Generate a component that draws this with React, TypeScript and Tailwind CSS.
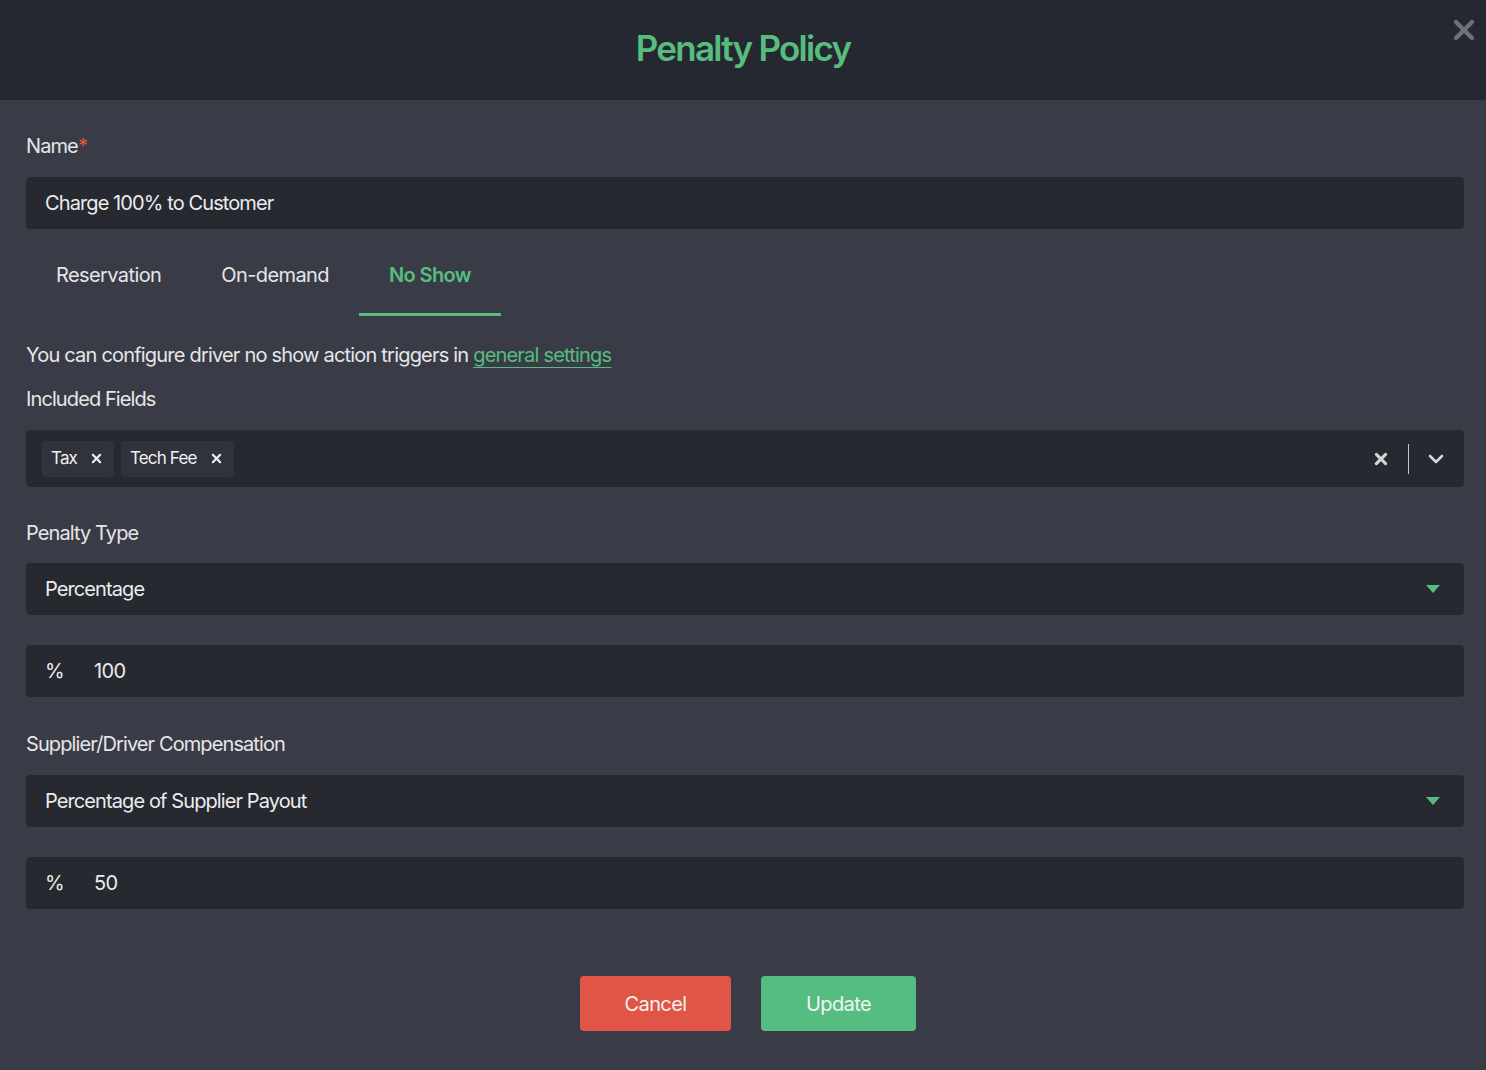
import React, { useState } from 'react';

const tabs = ['Reservation', 'On-demand', 'No Show'];

const CaretDown = () => (
  <svg width="16" height="10" viewBox="0 0 16 10"><path d="M1 1h14L8 9z" fill="#56bd7e" /></svg>
);

const XSmall = ({ size = 12, stroke = 2.4 }: { size?: number; stroke?: number }) => (
  <svg width={size} height={size} viewBox="0 0 12 12">
    <path d="M2 2l8 8M10 2l-8 8" stroke="currentColor" strokeWidth={stroke} strokeLinecap="round" />
  </svg>
);

const Label = ({ children }: { children: React.ReactNode }) => (
  <div className="text-[20px] leading-6 text-[#e6e6e8] tracking-[-0.045em]">{children}</div>
);

const SelectBox = ({ value }: { value: string }) => (
  <div className="h-[52px] rounded bg-[#262930] flex items-center justify-between pl-[19px] pr-[23px]">
    <span className="text-[20px] text-[#ececee] tracking-[-0.045em]">{value}</span>
    <CaretDown />
  </div>
);

const PercentInput = ({ value }: { value: string }) => (
  <div className="h-[52px] rounded bg-[#262930] flex items-center">
    <div className="w-[56px] h-full flex items-center pl-[19px] text-[20px] text-[#ececee] border-r border-[#272a31]">%</div>
    <div className="pl-[12px] text-[20px] text-[#ececee] tracking-[-0.03em]">{value}</div>
  </div>
);

export default function App() {
  const [active, setActive] = useState(2);

  return (
    <div className="w-[1486px] h-[1070px] bg-[#393c46] font-['Inter',sans-serif] overflow-hidden">
      <header className="relative h-[100px] bg-[#252830] flex items-center justify-center">
        <h1 className="text-[35px] font-semibold text-[#56bd7e] tracking-[-0.05em] -mt-1">Penalty Policy</h1>
        <button className="absolute right-[10px] top-[18px] text-[#6d707a]">
          <XSmall size={24} stroke={2.2} />
        </button>
      </header>

      <div className="pl-[26px] pr-[22px] pt-[34px]">
        <div className="text-[20px] leading-6 text-[#e6e6e8] tracking-[-0.045em]">
          Name<span className="text-[#e0553f]">*</span>
        </div>
        <div className="mt-[19px] h-[52px] rounded bg-[#262930] flex items-center pl-[19px] text-[20px] text-[#ececee] tracking-[-0.045em]">
          Charge 100% to Customer
        </div>

        <div className="mt-[14px] flex">
          {tabs.map((t, i) => (
            <button
              key={t}
              onClick={() => setActive(i)}
              className={`h-[73px] px-[30px] pt-[20px] flex items-start justify-center text-[20px] leading-6 tracking-[-0.03em] border-b-[3px] ${
                i === active ? 'text-[#56bd7e] font-semibold tracking-[-0.02em] border-[#56bd7e]' : 'text-[#e6e6e8] border-transparent'
              }`}
            >
              {t}
            </button>
          ))}
        </div>

        <div className="mt-[27px] text-[20px] leading-6 text-[#e6e6e8] tracking-[-0.04em]">
          You can configure driver no show action triggers in{' '}
          <a className="text-[#56bd7e] underline underline-offset-[5px] decoration-1">general settings</a>
        </div>

        <div className="mt-[20px]">
          <Label>Included Fields</Label>
        </div>

        <div className="mt-[19px] h-[57px] rounded bg-[#262930] flex items-center pl-[16px] pr-[19px]">
          <div className="flex gap-[7px] flex-1">
            {['Tax', 'Tech Fee'].map((c) => (
              <div key={c} className="h-[36px] rounded-sm bg-[#30333b] flex items-center pl-[9px] pr-[12px] gap-[14px] text-[17px] text-[#f0f0f2] tracking-[-0.05em]">
                {c}
                <XSmall size={11} stroke={2.4} />
              </div>
            ))}
          </div>
          <div className="flex items-center text-[#d6d6d8]">
            <XSmall size={14} stroke={2.6} />
            <div className="w-px h-[30px] bg-[#c8c8ca] ml-[20px] mr-[18px]" />
            <svg width="18" height="12" viewBox="0 0 18 12">
              <path d="M3 3l6 6 6-6" stroke="currentColor" strokeWidth="2.6" fill="none" strokeLinecap="round" strokeLinejoin="round" />
            </svg>
          </div>
        </div>

        <div className="mt-[34px]">
          <Label>Penalty Type</Label>
        </div>
        <div className="mt-[18px]">
          <SelectBox value="Percentage" />
        </div>
        <div className="mt-[30px]">
          <PercentInput value="100" />
        </div>

        <div className="mt-[35px]">
          <Label>Supplier/Driver Compensation</Label>
        </div>
        <div className="mt-[19px]">
          <SelectBox value="Percentage of Supplier Payout" />
        </div>
        <div className="mt-[30px]">
          <PercentInput value="50" />
        </div>

        <div className="mt-[67px] flex justify-center gap-[30px] pl-[6px]">
          <button className="w-[151px] h-[55px] rounded bg-[#e05546] text-[20px] text-[#f2f2f2] tracking-[-0.03em]">Cancel</button>
          <button className="w-[155px] h-[55px] rounded bg-[#56bd80] text-[20px] text-[#f2f2f2] tracking-[-0.03em]">Update</button>
        </div>
      </div>
    </div>
  );
}
